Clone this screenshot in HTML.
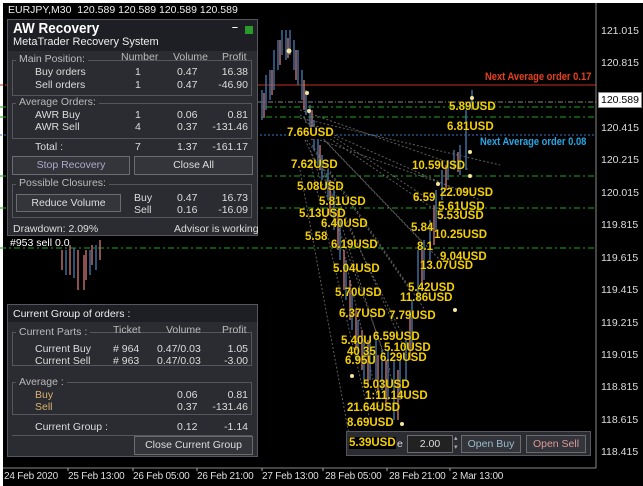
<!DOCTYPE html>
<html><head><meta charset="utf-8"><style>
*{margin:0;padding:0;box-sizing:border-box}
body{width:643px;height:486px;background:#fff;position:relative;overflow:hidden;font-family:"Liberation Sans",sans-serif}
#c{position:absolute;left:3px;top:3px;width:640px;height:483px;background:#000}
.a{position:absolute;white-space:nowrap}
.ax{color:#ddd;font-size:10.5px}
.t{color:#ddd;font-size:10px;letter-spacing:-0.2px}
.y{position:absolute;color:#f5d000;font-weight:bold;font-size:11.5px;white-space:nowrap;text-shadow:0 0 1px #000}
.p{position:absolute;background:#1e1f24;border:1px solid #55575c;color:#ddd;font-size:10.5px}
.g{position:absolute;border:1px solid #55575c}
.gl{position:absolute;background:#1e1f24;padding:0 3px;color:#bbb;font-size:10.5px}
.btn{position:absolute;background:#34353a;border:1px solid #6a6c70;color:#ddd;font-size:10.5px;text-align:center}
.r{text-align:right}
</style></head><body>
<div id="c"></div>
<svg class="a" style="left:0;top:0" width="643" height="486">
<line x1="596" y1="3" x2="596" y2="468" stroke="#888"/>
<line x1="3" y1="468" x2="596" y2="468" stroke="#888"/>
<line x1="258" y1="85" x2="596" y2="85" stroke="#c0301e" stroke-width="1"/>
<line x1="0" y1="85" x2="10" y2="85" stroke="#c0301e" stroke-dasharray="3 2"/>
<line x1="258" y1="102" x2="596" y2="102" stroke="#888" stroke-dasharray="5 2 1 2"/>
<g stroke="#1fa51f" stroke-dasharray="6 3 2 3">
<line x1="0" y1="107" x2="596" y2="107"/><line x1="0" y1="117" x2="596" y2="117"/>
<line x1="0" y1="176" x2="596" y2="176"/><line x1="0" y1="208" x2="596" y2="208"/><line x1="0" y1="248" x2="596" y2="248"/></g>
<line x1="0" y1="135" x2="596" y2="135" stroke="#3a78c8" stroke-dasharray="2 2"/>
<g stroke="#777" stroke-dasharray="2 2" opacity=".8">
<line x1="300" y1="110" x2="470" y2="170"/><line x1="300" y1="115" x2="430" y2="200"/><line x1="305" y1="120" x2="420" y2="240"/>
<line x1="300" y1="130" x2="410" y2="290"/><line x1="305" y1="140" x2="400" y2="330"/><line x1="310" y1="150" x2="390" y2="370"/>
<line x1="310" y1="160" x2="370" y2="420"/><line x1="300" y1="170" x2="350" y2="440"/><line x1="320" y1="140" x2="460" y2="190"/>
<line x1="315" y1="130" x2="440" y2="260"/><line x1="310" y1="125" x2="450" y2="220"/><line x1="312" y1="145" x2="425" y2="310"/>
<line x1="318" y1="155" x2="405" y2="350"/><line x1="322" y1="165" x2="395" y2="390"/><line x1="326" y1="175" x2="380" y2="410"/>
<line x1="300" y1="118" x2="500" y2="165"/><line x1="305" y1="122" x2="480" y2="200"/></g>
<g stroke="#aaa"><path d="M68 468v3M133 468v3M197 468v3M262 468v3M323 468v3M387 468v3M450 468v3"/></g>
<g stroke-width="1.5">
<path d="M262 120v-30M266 110v-35M270 100v-30M274 90v-40M278 70v-30M282 55v-25M286 60v-30M290 55v-25M294 70v-30M298 85v-35M302 100v-30M306 115v-25M310 130v-25M314 150v-30M318 165v-30M322 180v-25M328 200v-30M334 230v-40M340 260v-40M346 300v-40M352 330v-40M358 360v-40M364 380v-40M370 380v-40M376 380v-40M382 390v-40M388 400v-50M394 420v-60M400 400v-40M406 380v-40M412 350v-50M418 300v-50M424 280v-40M430 260v-40M436 230v-40M442 200v-30M448 180v-20M454 170v-20M460 175v-30M466 170v-60M472 110v-20" stroke="#3c6e9e"/>
<path d="M264 118v-25M272 95v-25M280 65v-25M288 58v-20M296 80v-30M304 110v-30M312 140v-30M320 170v-25M330 215v-35M338 250v-40M344 290v-40M350 320v-40M356 350v-40M362 370v-40M368 385v-45M378 395v-40M386 410v-50M398 420v-50M410 360v-50M422 290v-40M434 245v-40M446 190v-25M458 172v-20" stroke="#b86b6b"/>
<path d="M62 250v20M70 245v30M78 250v40M86 250v30M92 245v20M100 240v20M84 255v35" stroke="#b86b6b"/>
<path d="M66 250v25M74 248v30M90 250v25M96 245v25" stroke="#3c6e9e"/>
</g>
<g fill="#f5e6a0"><circle cx="289" cy="51" r="2.5"/><circle cx="307" cy="93" r="2"/><circle cx="309" cy="111" r="2"/><circle cx="472" cy="98" r="2"/><circle cx="470" cy="152" r="2"/><circle cx="470" cy="176" r="2"/><circle cx="438" cy="184" r="2"/><circle cx="402" cy="424" r="2"/><circle cx="352" cy="376" r="2"/><circle cx="455" cy="310" r="2"/></g>
</svg>
<div class="a ax" style="left:8px;top:4px;color:#eee">EURJPY,M30&nbsp; 120.589 120.589 120.589 120.589</div>
<div class="a ax" style="left:601px;top:25px">121.015</div>
<div class="a ax" style="left:601px;top:57px">120.815</div>
<div class="a" style="left:598px;top:92px;background:#fff;color:#000;font-size:10.5px;padding:1px 2px;border:1px solid #888">120.589</div>
<div class="a ax" style="left:601px;top:122px">120.415</div>
<div class="a ax" style="left:601px;top:154px">120.215</div>
<div class="a ax" style="left:601px;top:187px">120.015</div>
<div class="a ax" style="left:601px;top:219px">119.815</div>
<div class="a ax" style="left:601px;top:252px">119.615</div>
<div class="a ax" style="left:601px;top:284px">119.415</div>
<div class="a ax" style="left:601px;top:317px">119.215</div>
<div class="a ax" style="left:601px;top:349px">119.015</div>
<div class="a ax" style="left:601px;top:381px">118.815</div>
<div class="a ax" style="left:601px;top:414px">118.615</div>
<div class="a ax" style="left:601px;top:446px">118.415</div>
<div class="a t" style="left:4px;top:471px">24 Feb 2020</div>
<div class="a t" style="left:68px;top:471px">25 Feb 13:00</div>
<div class="a t" style="left:133px;top:471px">26 Feb 05:00</div>
<div class="a t" style="left:197px;top:471px">26 Feb 21:00</div>
<div class="a t" style="left:262px;top:471px">27 Feb 13:00</div>
<div class="a t" style="left:325px;top:471px">28 Feb 05:00</div>
<div class="a t" style="left:389px;top:471px">28 Feb 21:00</div>
<div class="a t" style="left:452px;top:471px">2 Mar 13:00</div>
<div class="a" style="left:485px;top:71px;color:#e8401a;font-weight:bold;font-size:11px;transform:scaleX(.85);transform-origin:left">Next Average order 0.17</div>
<div class="a" style="left:480px;top:136px;color:#29a8e8;font-weight:bold;font-size:11px;transform:scaleX(.85);transform-origin:left">Next Average order 0.08</div>
<div class="a" style="left:10px;top:237px;color:#fff;font-size:10.5px">#953 sell 0.0</div>
<div class="y" style="left:449px;top:101px">5.89USD</div>
<div class="y" style="left:447px;top:121px">6.81USD</div>
<div class="y" style="left:287px;top:127px;background:#000">7.66USD</div>
<div class="y" style="left:412px;top:160px">10.59USD</div>
<div class="y" style="left:291px;top:159px">7.62USD</div>
<div class="y" style="left:297px;top:181px">5.08USD</div>
<div class="y" style="left:440px;top:187px">22.09USD</div>
<div class="y" style="left:413px;top:192px">6.59</div>
<div class="y" style="left:319px;top:196px">5.81USD</div>
<div class="y" style="left:438px;top:201px">5.61USD</div>
<div class="y" style="left:299px;top:208px">5.13USD</div>
<div class="y" style="left:437px;top:210px">5.53USD</div>
<div class="y" style="left:321px;top:218px">6.40USD</div>
<div class="y" style="left:411px;top:222px">5.84</div>
<div class="y" style="left:434px;top:229px">10.25USD</div>
<div class="y" style="left:305px;top:231px">5.58</div>
<div class="y" style="left:331px;top:239px">6.19USD</div>
<div class="y" style="left:417px;top:241px">8.1</div>
<div class="y" style="left:440px;top:251px">9.04USD</div>
<div class="y" style="left:420px;top:260px">13.07USD</div>
<div class="y" style="left:333px;top:263px">5.04USD</div>
<div class="y" style="left:408px;top:282px">5.42USD</div>
<div class="y" style="left:335px;top:287px">5.70USD</div>
<div class="y" style="left:400px;top:292px">11.86USD</div>
<div class="y" style="left:339px;top:308px">6.37USD</div>
<div class="y" style="left:389px;top:310px">7.79USD</div>
<div class="y" style="left:373px;top:331px">6.59USD</div>
<div class="y" style="left:341px;top:335px">5.40U</div>
<div class="y" style="left:384px;top:342px">5.10USD</div>
<div class="y" style="left:347px;top:346px">40 35</div>
<div class="y" style="left:345px;top:355px">6.95U</div>
<div class="y" style="left:380px;top:352px">6.29USD</div>
<div class="y" style="left:363px;top:379px">5.03USD</div>
<div class="y" style="left:365px;top:390px">1:11.14USD</div>
<div class="y" style="left:347px;top:402px">21.64USD</div>
<div class="y" style="left:347px;top:417px">8.69USD</div>

<div class="p" style="left:7px;top:19px;width:251px;height:217px">
 <div class="a" style="left:5px;top:0px;color:#fff;font-weight:bold;font-size:15px;transform:scaleX(.9);transform-origin:left">AW Recovery</div>
 <div class="a" style="left:5px;top:16px;color:#eee;font-size:11px">MetaTrader Recovery System</div>
 <div class="a" style="left:224px;top:1px;color:#fff;font-weight:bold">–</div>
 <div class="a" style="left:237px;top:6px;width:8px;height:8px;background:#2a9a2a"></div>
 <div class="a" style="left:0;top:31px;width:249px;height:184px;background:#2b2c31"></div>
 <div class="g" style="left:4px;top:40px;width:240px;height:36px"></div>
 <div class="gl" style="left:8px;top:33px;background:#2b2c31">Main Position:</div>
 <div class="a" style="left:113px;top:31px;color:#bbb">Number</div><div class="a" style="left:165px;top:31px;color:#bbb">Volume</div><div class="a" style="left:214px;top:31px;color:#bbb">Profit</div>
 <div class="a" style="left:27px;top:46px">Buy orders</div><div class="a" style="left:127px;top:46px">1</div><div class="a" style="left:169px;top:46px">0.47</div><div class="a r" style="left:200px;top:46px;width:40px">16.38</div>
 <div class="a" style="left:27px;top:59px">Sell orders</div><div class="a" style="left:127px;top:59px">1</div><div class="a" style="left:169px;top:59px">0.47</div><div class="a r" style="left:200px;top:59px;width:40px">-46.90</div>
 <div class="g" style="left:4px;top:83px;width:240px;height:36px"></div>
 <div class="gl" style="left:8px;top:76px;background:#2b2c31">Average Orders:</div>
 <div class="a" style="left:27px;top:89px">AWR Buy</div><div class="a" style="left:127px;top:89px">1</div><div class="a" style="left:169px;top:89px">0.06</div><div class="a r" style="left:200px;top:89px;width:40px">0.81</div>
 <div class="a" style="left:27px;top:101px">AWR Sell</div><div class="a" style="left:127px;top:101px">4</div><div class="a" style="left:169px;top:101px">0.37</div><div class="a r" style="left:200px;top:101px;width:40px">-131.46</div>
 <div class="a" style="left:27px;top:121px">Total :</div><div class="a" style="left:127px;top:121px">7</div><div class="a" style="left:169px;top:121px">1.37</div><div class="a r" style="left:200px;top:121px;width:40px">-161.17</div>
 <div class="btn" style="left:4px;top:136px;width:118px;height:19px;line-height:17px;color:#aac">Stop Recovery</div>
 <div class="btn" style="left:126px;top:136px;width:119px;height:19px;line-height:17px">Close All</div>
 <div class="g" style="left:4px;top:164px;width:240px;height:34px"></div>
 <div class="gl" style="left:8px;top:157px;background:#2b2c31">Possible Closures:</div>
 <div class="btn" style="left:8px;top:174px;width:105px;height:18px;line-height:16px">Reduce Volume</div>
 <div class="a" style="left:126px;top:172px">Buy</div><div class="a" style="left:169px;top:172px">0.47</div><div class="a r" style="left:200px;top:172px;width:40px">16.73</div>
 <div class="a" style="left:126px;top:184px">Sell</div><div class="a" style="left:169px;top:184px">0.16</div><div class="a r" style="left:200px;top:184px;width:40px">-16.09</div>
 <div class="a" style="left:5px;top:203px">Drawdown: 2.09%</div><div class="a" style="left:166px;top:203px">Advisor is working</div>
</div>

<div class="p" style="left:7px;top:304px;width:251px;height:153px">
 <div class="a" style="left:5px;top:3px;color:#eee">Current Group of orders :</div>
 <div class="a" style="left:0;top:17px;width:249px;height:134px;background:#2b2c31"></div>
 <div class="g" style="left:4px;top:27px;width:240px;height:34px"></div>
 <div class="gl" style="left:8px;top:21px;background:#2b2c31">Current Parts :</div>
 <div class="a" style="left:105px;top:19px;color:#bbb">Ticket</div><div class="a" style="left:158px;top:19px;color:#bbb">Volume</div><div class="a" style="left:214px;top:19px;color:#bbb">Profit</div>
 <div class="a" style="left:27px;top:38px">Current Buy</div><div class="a" style="left:105px;top:38px"># 964</div><div class="a" style="left:149px;top:38px">0.47/0.03</div><div class="a r" style="left:200px;top:38px;width:40px">1.05</div>
 <div class="a" style="left:27px;top:50px">Current Sell</div><div class="a" style="left:105px;top:50px"># 963</div><div class="a" style="left:149px;top:50px">0.47/0.03</div><div class="a r" style="left:200px;top:50px;width:40px">-3.00</div>
 <div class="g" style="left:4px;top:77px;width:240px;height:33px"></div>
 <div class="gl" style="left:8px;top:71px;background:#2b2c31">Average :</div>
 <div class="a" style="left:27px;top:84px;color:#d8b070">Buy</div><div class="a" style="left:169px;top:84px">0.06</div><div class="a r" style="left:200px;top:84px;width:40px">0.81</div>
 <div class="a" style="left:27px;top:96px;color:#d8b070">Sell</div><div class="a" style="left:169px;top:96px">0.37</div><div class="a r" style="left:200px;top:96px;width:40px">-131.46</div>
 <div class="a" style="left:27px;top:116px">Current Group :</div><div class="a" style="left:169px;top:116px">0.12</div><div class="a r" style="left:200px;top:116px;width:40px">-1.14</div>
 <div class="a" style="left:4px;top:130px;width:240px;border-top:1px solid #55575c"></div>
 <div class="btn" style="left:126px;top:131px;width:119px;height:19px;line-height:17px">Close Current Group</div>
</div>

<div class="p" style="left:346px;top:431px;width:245px;height:25px;background:#2b2c31">
 <div class="y" style="left:2px;top:5px;background:#000">5.39USD</div>
 <div class="a" style="left:50px;top:6px">e</div>
 <div class="btn" style="left:60px;top:3px;width:46px;height:18px;line-height:16px;background:#222">2.00</div>
 <div class="a" style="left:107px;top:2px;color:#aaa;font-size:7px;line-height:9px">▴<br>▾</div>
 <div class="btn" style="left:114px;top:3px;width:60px;height:18px;line-height:16px;color:#9bc">Open Buy</div>
 <div class="btn" style="left:179px;top:3px;width:60px;height:18px;line-height:16px;color:#d99">Open Sell</div>
</div>
</body></html>
